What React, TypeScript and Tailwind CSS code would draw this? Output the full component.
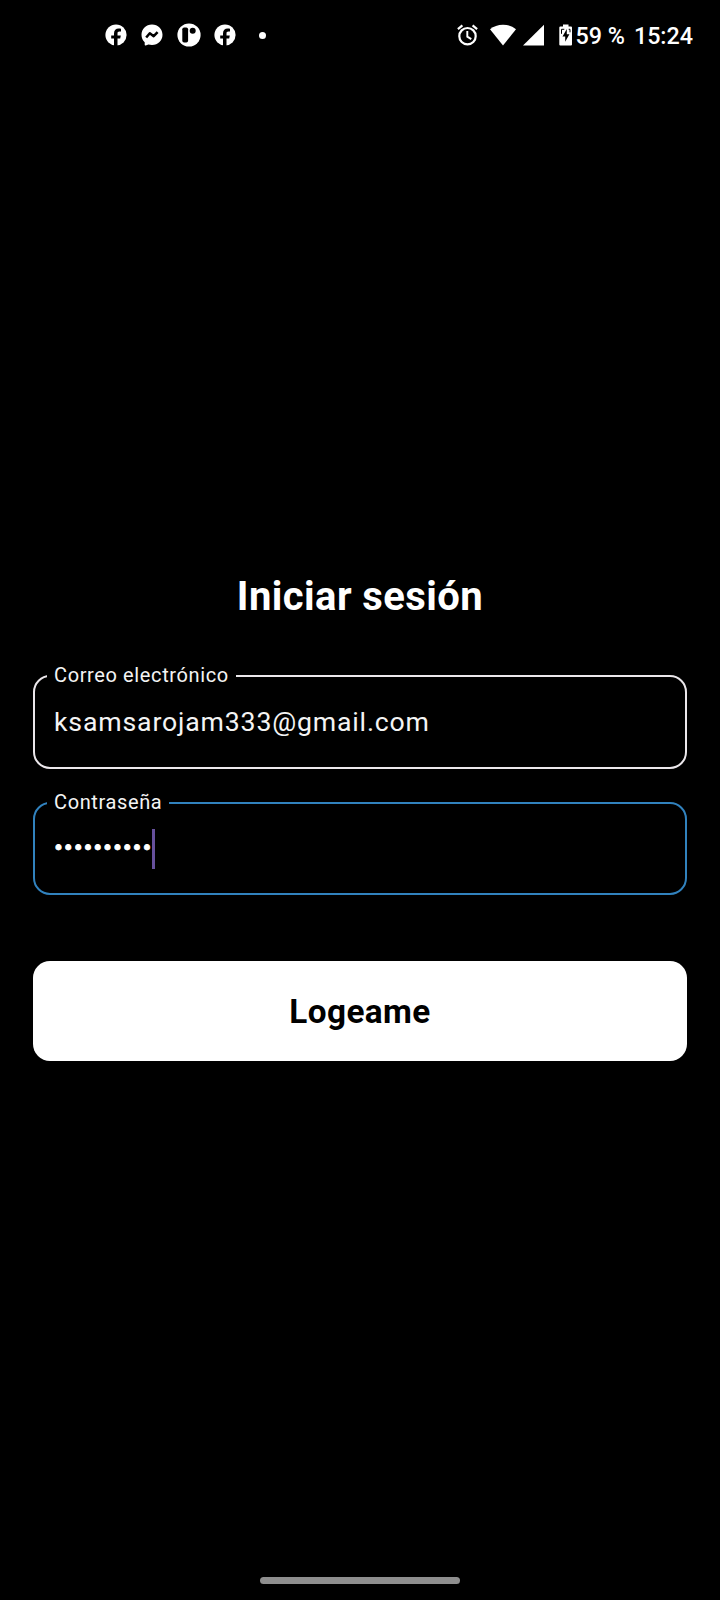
import type { ReactNode } from 'react';

function FacebookIcon() {
  return (
    <svg className="size-[22px]" viewBox="0 0 22 22" aria-hidden="true">
      <circle cx="11" cy="11" r="10.6" fill="#fff" />
      <path
        d="M9 22v-7.400H6.200v-3.200H9V9.400c0-3.200 1.900-4.900 4.700-4.900.9 0 1.700.1 2.300.2v2.900h-1.500c-1.500 0-2 .8-2 1.800v2h3.300l-.6 3.200h-2.700V22z"
        fill="#000"
      />
    </svg>
  );
}

function MessengerIcon() {
  return (
    <svg className="size-[22px]" viewBox="0 0 22 22" aria-hidden="true">
      <path
        d="M11 .4C5 .4.5 4.800.5 10.700c0 3.100 1.200 5.700 3.200 7.500v2.600c0 .6.5.9 1 .7l2.700-1.100c1.100.3 2.300.5 3.600.5 6 0 10.500-4.300 10.500-10.200S17 .4 11 .4z"
        fill="#fff"
      />
      <path d="M5.200 13.500l3.600-4.300 3.900 3 3.900-4.100" fill="none" stroke="#000" strokeWidth="2.500" strokeLinejoin="round" />
    </svg>
  );
}

function RoundAppIcon() {
  return (
    <svg className="size-6" viewBox="0 0 24 24" aria-hidden="true">
      <circle cx="12" cy="12" r="11.600" fill="#fff" />
      <rect x="5.300" y="4.500" width="5.800" height="15" rx="1.800" fill="#000" />
      <circle cx="15.700" cy="7.700" r="3" fill="#000" />
    </svg>
  );
}

function AlarmIcon() {
  return (
    <svg className="h-[22px] w-[21px]" viewBox="0 0 21 22" fill="none" stroke="#fff" aria-hidden="true">
      <circle cx="10.500" cy="12.200" r="8.200" strokeWidth="2.200" />
      <path d="M10.300 7v5.600l4 2.500" strokeWidth="1.900" />
      <path d="M.9 5.200l4.500-3.800M20.100 5.200l-4.500-3.800" strokeWidth="2.200" />
    </svg>
  );
}

function WifiIcon() {
  return (
    <svg className="h-[22px] w-[26px]" viewBox="0 0 26 22" aria-hidden="true">
      <path d="M0 5.300C3.600 2.300 8 .7 13 .7s9.400 1.600 13 4.600L13 21.400z" fill="#fff" />
    </svg>
  );
}

function SignalIcon() {
  return (
    <svg className="h-[22px] w-[21px]" viewBox="0 0 21 22" aria-hidden="true">
      <path d="M21 .7v20.800H0z" fill="#fff" />
    </svg>
  );
}

function BatteryIcon() {
  return (
    <svg className="h-[22px] w-[14px]" viewBox="0 0 14 22" aria-hidden="true">
      <path d="M4 .5h5.500v2H12q1 0 1 1v17q0 1-1 1H1.300q-1 0-1-1v-17q0-1 1-1H4z" fill="#fff" />
      <path d="M7.800 5L3.500 12.400h2.700v5.300l4.200-7.500H7.800z" fill="#000" />
      <path d="M2.500 9.800V5.300h2.800M9.700 5.300h1.300v3" fill="none" stroke="#000" strokeWidth="1" />
    </svg>
  );
}

function Field({ label, tone, children }: { label: string; tone: string; children: ReactNode }) {
  return (
    <fieldset className={`rounded-[17px] border-2 pl-[12px] ${tone}`}>
      <legend className="h-[24px] px-[7px] text-[20px] leading-[22px] tracking-[0.62px] text-[#f4f4f4]">{label}</legend>
      <div className="mt-[14px] flex h-[40px] items-center pl-[7px] text-[26.67px] leading-[40px] tracking-[0.83px] text-[#f4f4f4]">
        {children}
      </div>
    </fieldset>
  );
}

export default function App() {
  return (
    <div className="flex h-[1600px] w-[720px] flex-col bg-black font-['Roboto',sans-serif] text-white">
      <header className="flex h-[70px] items-center justify-between pl-[104.5px] pr-[27px]">
        <div className="flex items-center">
          <FacebookIcon />
          <span className="ml-[14.5px] flex"><MessengerIcon /></span>
          <span className="ml-[13.5px] flex"><RoundAppIcon /></span>
          <span className="ml-[13.5px] flex"><FacebookIcon /></span>
          <span className="ml-[22.5px] size-[7px] rounded-full bg-white" />
        </div>
        <div className="flex items-center text-[23.3px] font-medium leading-[30px]">
          <AlarmIcon />
          <span className="ml-3 flex"><WifiIcon /></span>
          <span className="ml-[7px] flex"><SignalIcon /></span>
          <span className="ml-[15px] flex"><BatteryIcon /></span>
          <span className="ml-[2px] pt-px">59 %</span>
          <span className="ml-[9px] pt-px">15:24</span>
        </div>
      </header>

      <main className="flex grow flex-col px-[33px] pt-[503px]">
        <h1 className="h-[48px] text-center text-[40px] font-bold leading-[48px] tracking-[0.42px]">Iniciar sesión</h1>
        <form className="mt-[43px] flex flex-col" onSubmit={(e) => e.preventDefault()}>
          <Field label="Correo electrónico" tone="h-[105px] border-[#ebe7eb]">
            ksamsarojam333@gmail.com
          </Field>
          <div className="h-[22px]" />
          <Field label="Contraseña" tone="h-[104px] border-[#3182be]">
            <span className="relative -top-px text-white [-webkit-text-stroke:0.8px_white]">••••••••••</span>
            <span className="h-[40px] w-[3px] bg-[#66509c]" />
          </Field>
          <button className="mt-[66px] h-[100px] rounded-[17px] bg-white pt-[2px] text-[33.3px] font-bold tracking-[0.42px] text-black">
            Logeame
          </button>
        </form>
      </main>

      <footer className="flex h-[23px] justify-center">
        <div className="h-[7px] w-[200px] rounded-full bg-[#8e8e8e]" />
      </footer>
    </div>
  );
}
